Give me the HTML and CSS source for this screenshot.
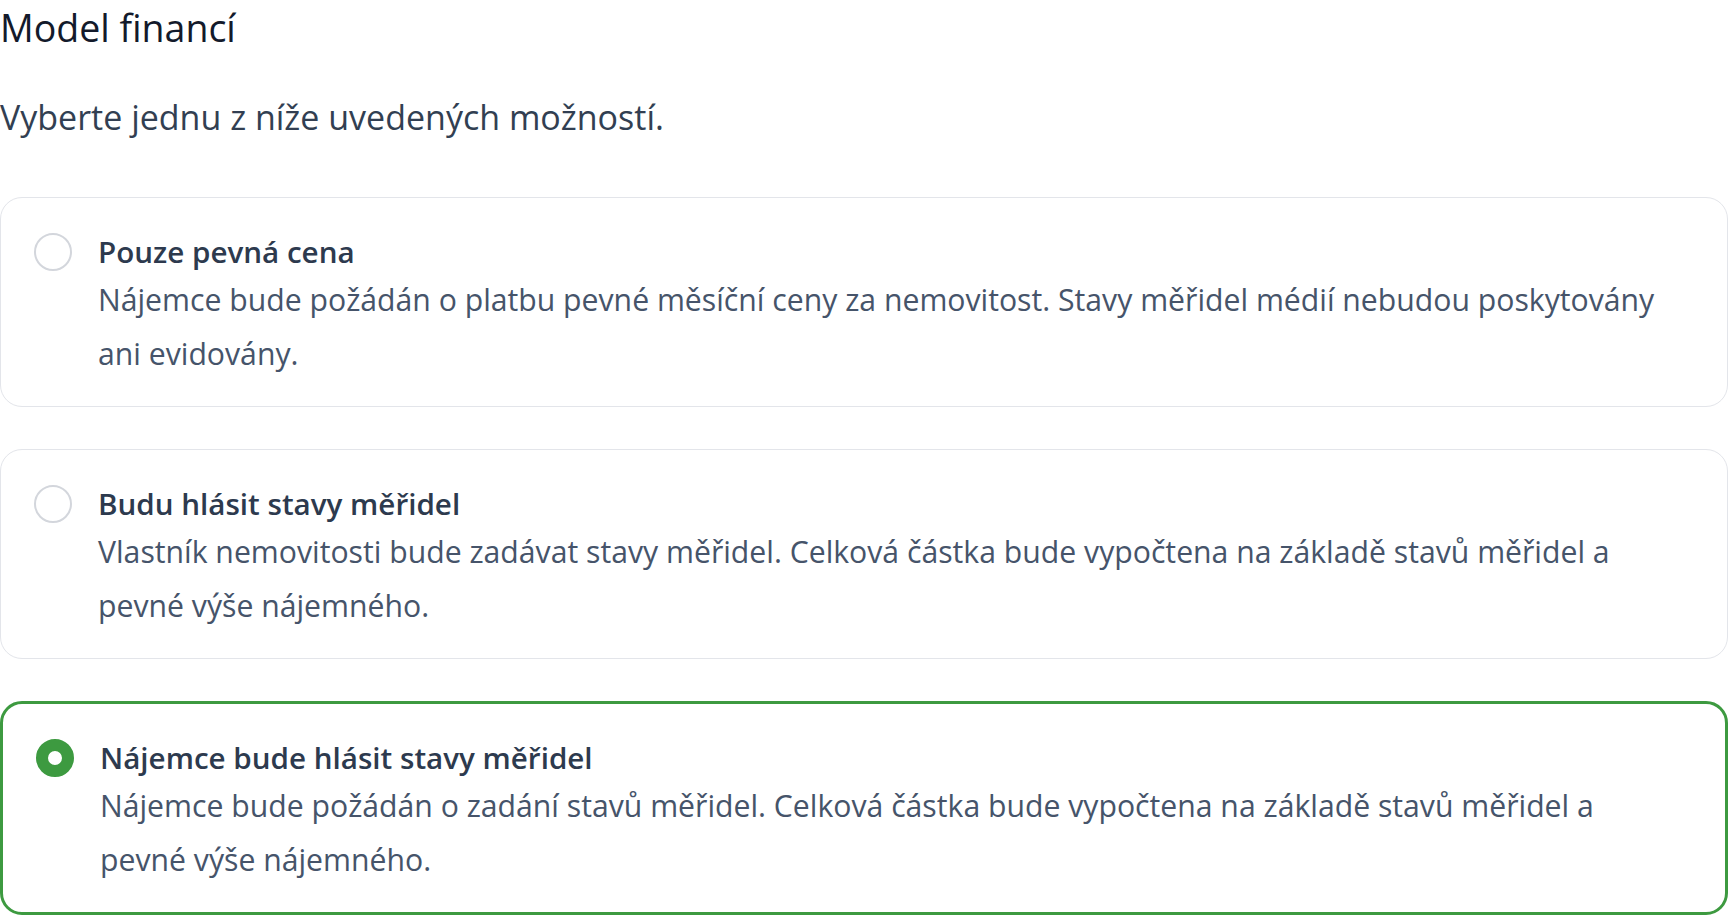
FILE: index.html
```html
<!DOCTYPE html>
<html lang="cs">
<head>
    <meta charset="utf-8">
    <meta name="viewport" content="width=device-width, initial-scale=1.0">
    <title>Model financí</title>
    <link rel="stylesheet" href="styles.css">
</head>
<body>
    <main class="page">
        <h1 class="page-title">Model financí</h1>
        <p class="page-lead">Vyberte jednu z níže uvedených možností.</p>

        <div class="options">
            <label class="option">
                <input class="option-input" type="radio" name="model">
                <span class="option-radio"></span>
                <span class="option-body">
                    <span class="option-title">Pouze pevná cena</span>
                    <span class="option-desc">Nájemce bude požádán o platbu pevné měsíční ceny za nemovitost. Stavy měřidel médií nebudou poskytovány ani evidovány.</span>
                </span>
            </label>

            <label class="option">
                <input class="option-input" type="radio" name="model">
                <span class="option-radio"></span>
                <span class="option-body">
                    <span class="option-title">Budu hlásit stavy měřidel</span>
                    <span class="option-desc">Vlastník nemovitosti bude zadávat stavy měřidel. Celková částka bude vypočtena na základě stavů měřidel a pevné výše nájemného.</span>
                </span>
            </label>

            <label class="option">
                <input class="option-input" type="radio" name="model" checked>
                <span class="option-radio"></span>
                <span class="option-body">
                    <span class="option-title">Nájemce bude hlásit stavy měřidel</span>
                    <span class="option-desc">Nájemce bude požádán o zadání stavů měřidel. Celková částka bude vypočtena na základě stavů měřidel a pevné výše nájemného.</span>
                </span>
            </label>
        </div>
    </main>
</body>
</html>
```

FILE: styles.css
```css
body {
    margin: 0;
    font-family: "Open Sans", "Noto Sans", sans-serif;
    background: #fff;
    color: #2d3748;
}

.page-title {
    margin: 0;
    font-size: 37.5px;
    font-weight: 400;
    line-height: 56px;
    color: #131a2b;
}

.page-lead {
    margin: 37px 0 0;
    font-size: 34px;
    line-height: 48px;
    color: #323f52;
}

.options {
    margin-top: 56px;
    display: flex;
    flex-direction: column;
    gap: 42px;
}

.option {
    display: flex;
    align-items: flex-start;
    gap: 26px;
    padding: 33px 48px 25px 33px;
    border: 1px solid #e3e5ea;
    border-radius: 22px;
    cursor: pointer;
}

.option-input {
    display: none;
}

.option-radio {
    flex: none;
    width: 38px;
    height: 38px;
    margin-top: 2px;
    box-sizing: border-box;
    border: 2px solid #d3d6dc;
    border-radius: 50%;
    background: #fff;
}

.option-body {
    display: flex;
    flex-direction: column;
}

.option-title {
    font-size: 29.6px;
    font-weight: 600;
    line-height: 42px;
    color: #2d3a4e;
}

.option-desc {
    font-size: 30.2px;
    line-height: 54px;
    color: #46546a;
}

/* selected state */
.option:has(.option-input:checked) {
    border: 3px solid #3d9a40;
}

.option-input:checked + .option-radio {
    border: 12px solid #3d9a40;
}
```
